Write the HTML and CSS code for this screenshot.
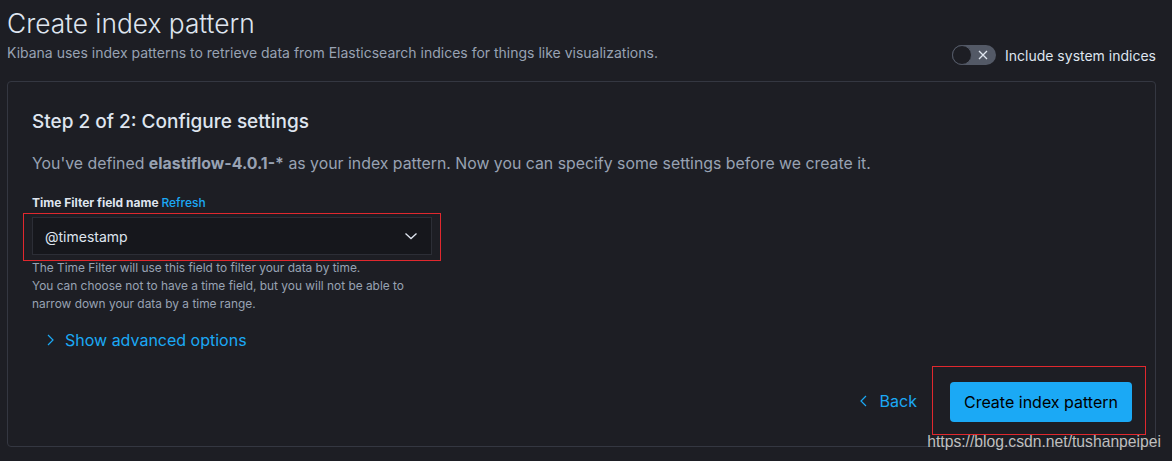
FILE: index.html
```html
<!DOCTYPE html>
<html lang="en">
<head>
    <meta charset="UTF-8">
    <title>Create index pattern</title>
    <link rel="stylesheet" href="styles.css">
</head>
<body>
    <div class="page">
        <div class="header">
            <div class="header-text">
                <h1 class="title">Create index pattern</h1>
                <p class="subtitle">Kibana uses index patterns to retrieve data from Elasticsearch indices for things like visualizations.</p>
            </div>
            <label class="switch">
                <span class="switch-track">
                    <span class="switch-knob"></span>
                    <svg class="switch-x" width="12" height="12" viewBox="0 0 12 12"><path d="M2 2 L10 10 M10 2 L2 10" stroke="#dfe5ef" stroke-width="1.3" fill="none"/></svg>
                </span>
                <span class="switch-label">Include system indices</span>
            </label>
        </div>

        <div class="panel">
            <h2 class="step">Step 2 of 2: Configure settings</h2>
            <p class="intro">You've defined <strong>elastiflow-4.0.1-*</strong> as your index pattern. Now you can specify some settings before we create it.</p>

            <div class="field">
                <div class="field-label">Time Filter field name <a class="link">Refresh</a></div>
                <div class="mark mark-select">
                    <div class="select">
                        <span>@timestamp</span>
                        <svg width="16" height="16" viewBox="0 0 16 16"><path d="M2.5 5.5 L8 10.5 L13.5 5.5" stroke="#dfe5ef" stroke-width="1.3" fill="none"/></svg>
                    </div>
                </div>
                <div class="help">
                    The Time Filter will use this field to filter your data by time.<br>
                    You can choose not to have a time field, but you will not be able to<br>
                    narrow down your data by a time range.
                </div>
            </div>

            <div class="advanced">
                <svg width="16" height="16" viewBox="0 0 16 16"><path d="M6 3 L11 8 L6 13" stroke="#1ba9f5" stroke-width="1.2" fill="none"/></svg>
                <span>Show advanced options</span>
            </div>

            <div class="actions">
                <div class="back">
                    <svg width="16" height="16" viewBox="0 0 16 16"><path d="M10 3 L5 8 L10 13" stroke="#1ba9f5" stroke-width="1.2" fill="none"/></svg>
                    <span>Back</span>
                </div>
                <div class="mark mark-button">
                    <button class="create">Create index pattern</button>
                </div>
            </div>
        </div>

        <div class="watermark">https://blog.csdn.net/tushanpeipei</div>
    </div>
</body>
</html>
```

FILE: styles.css
```css
body {
    margin: 0;
    background-color: #1d1e24;
    color: #dfe5ef;
    font-family: 'Inter', 'Noto Sans', sans-serif;
}

.page {
    position: relative;
    padding: 0 16px 0 7px;
    height: 461px;
    overflow: hidden;
}

.header {
    display: flex;
    justify-content: space-between;
    align-items: flex-end;
}

.title {
    margin: 0;
    padding-top: 6px;
    font-size: 26.3px;
    font-weight: 300;
    line-height: 36px;
}

.subtitle {
    margin: 1px 0 0;
    font-size: 14px;
    line-height: 20px;
    color: #98a2b3;
}

.switch {
    display: flex;
    align-items: center;
    transform: translateY(2px);
}

.switch-track {
    position: relative;
    width: 44px;
    height: 20px;
    border-radius: 10px;
    background: #535966;
}

.switch-knob {
    position: absolute;
    left: 0;
    top: 0;
    width: 18px;
    height: 18px;
    border-radius: 50%;
    background: #1d1e24;
    border: 1px solid #535966;
}

.switch-x {
    position: absolute;
    right: 7px;
    top: 4px;
}

.switch-label {
    margin-left: 9px;
    font-size: 14px;
}

.panel {
    box-sizing: border-box;
    margin-top: 18px;
    border: 1px solid #343741;
    border-radius: 4px;
    padding: 28px 24px 0 24px;
    height: 366px;
}

.step {
    margin: 0;
    font-size: 19px;
    font-weight: 500;
    line-height: 24px;
}

.intro {
    margin: 18px 0 0;
    font-size: 15.85px;
    line-height: 24px;
    color: #98a2b3;
}

.intro strong {
    font-weight: 700;
}

.field {
    margin-top: 18px;
}

.field-label {
    font-size: 12px;
    font-weight: 700;
    line-height: 18px;
}

.link {
    color: #1ba9f5;
    font-weight: 500;
}

.mark {
    border: 1px solid #e0282e;
}

.mark-select {
    width: 400px;
    margin-left: -9px;
    padding: 3px 8px 5px 8px;
    margin-top: 1px;
}

.select {
    display: flex;
    justify-content: space-between;
    align-items: center;
    height: 36px;
    padding: 0 12px;
    background: #16171c;
    border: 1px solid #2c2e36;
    font-size: 14px;
}

.help {
    margin-top: -2px;
    font-size: 11.9px;
    line-height: 18px;
    color: #98a2b3;
}

.advanced {
    display: flex;
    align-items: center;
    margin-top: 15px;
    padding-left: 10px;
    color: #1ba9f5;
    font-size: 16px;
    line-height: 24px;
}

.advanced span {
    margin-left: 7px;
}

.actions {
    display: flex;
    justify-content: flex-end;
    align-items: center;
    margin-top: 14px;
    margin-right: -15px;
}

.back {
    display: flex;
    align-items: center;
    color: #1ba9f5;
    font-size: 16px;
    margin-right: 15px;
}

.back span {
    margin-left: 8px;
}

.mark-button {
    padding: 15px 13px 12px 17px;
}

.create {
    display: block;
    height: 40px;
    padding: 0 14px;
    border: none;
    border-radius: 4px;
    background: #1ba9f5;
    color: #000;
    font-family: inherit;
    font-size: 16px;
}

.watermark {
    position: absolute;
    right: 11px;
    top: 433px;
    font-family: 'Liberation Sans', Arial, sans-serif;
    font-size: 15.7px;
    color: #bfbfbf;
}
```
